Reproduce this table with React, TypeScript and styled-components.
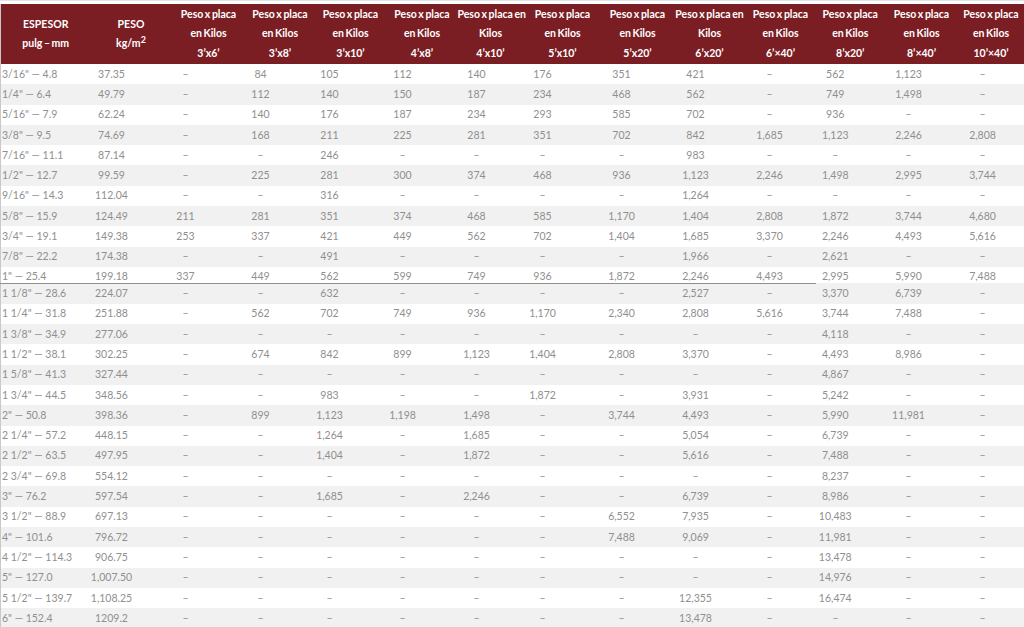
import React from "react";
import styled, { createGlobalStyle } from "styled-components";

const Global = createGlobalStyle`
  html, body { margin: 0; padding: 0; background: #fff; }
  body { font-family: Lato, "Open Sans", "Liberation Sans", sans-serif; }
`;

const Page = styled.div`
  width: 1024px;
  height: 627px;
  overflow: hidden;
  padding-top: 3px;
  box-sizing: border-box;
  border-top: 1px solid #e4e4e4;
`;

const Table = styled.table`
  width: 1024px;
  table-layout: fixed;
  border-collapse: collapse;
  border-spacing: 0;
  border-left: 1px solid #c9c9c9;
`;

const Th = styled.th`
  background: #7b1e23;
  color: #fff;
  font-family: Lato, "Liberation Sans", sans-serif;
  font-weight: 700;
  font-size: 10.5px;
  word-spacing: -1px;
  line-height: 19.5px;
  height: 60px;
  padding: 0;
  text-align: center;
  vertical-align: middle;
  white-space: nowrap;
  sup { font-size: 9px; line-height: 0; vertical-align: 4px; }
`;

const Row = styled.tr<{ $short?: boolean }>`
  height: ${(p) => (p.$short ? "16px" : "20.3px")};
  &:nth-child(even) td { background: #f1f1f1; }
`;

const Td = styled.td<{ $shift: number; $first?: boolean; $short?: boolean; $line?: boolean }>`
  padding: ${(p) => (p.$short ? "3px" : "0")} ${(p) => (p.$first ? 0 : p.$shift * 2)}px 0
    ${(p) => (p.$first ? 1 : 0)}px;
  text-align: ${(p) => (p.$first ? "left" : "center")};
  font-size: 10.5px;
  line-height: 13px;
  color: #8f8f8f;
  white-space: nowrap;
  vertical-align: ${(p) => (p.$short ? "top" : "middle")};
  border-bottom: ${(p) => (p.$line ? "1px solid #8f8f8f" : "none")};
`;

type Col = { w: number; shift: number; head: React.ReactNode };

const cols: Col[] = [
  { w: 90, shift: 0, head: <>ESPESOR<br />pulg – mm</> },
  { w: 81, shift: 19.5, head: <>PESO<br />kg/m<sup>2</sup></> },
  { w: 74, shift: 23, head: <>Peso x placa<br />en Kilos<br />3’x6’</> },
  { w: 69, shift: 19.5, head: <>Peso x placa<br />en Kilos<br />3’x8’</> },
  { w: 72, shift: 21, head: <>Peso x placa<br />en Kilos<br />3’x10’</> },
  { w: 71, shift: 19.5, head: <>Peso x placa<br />en Kilos<br />4’x8’</> },
  { w: 66, shift: 14, head: <>Peso x placa en<br />Kilos<br />4’x10’</> },
  { w: 78, shift: 20, head: <>Peso x placa<br />en Kilos<br />5’x10’</> },
  { w: 72, shift: 16, head: <>Peso x placa<br />en Kilos<br />5’x20’</> },
  { w: 72, shift: 14, head: <>Peso x placa en<br />Kilos<br />6’x20’</> },
  { w: 70, shift: 11, head: <>Peso x placa<br />en Kilos<br />6’×40’</> },
  { w: 70, shift: 15, head: <>Peso x placa<br />en Kilos<br />8’x20’</> },
  { w: 72, shift: 13, head: <>Peso x placa<br />en Kilos<br />8’×40’</> },
  { w: 67, shift: 8.5, head: <>Peso x placa<br />en Kilos<br />10’×40’</> },
];

const D = "–";

const data: string[][] = [
  ["3/16\" — 4.8", "37.35", D, "84", "105", "112", "140", "176", "351", "421", D, "562", "1,123", D],
  ["1/4\" — 6.4", "49.79", D, "112", "140", "150", "187", "234", "468", "562", D, "749", "1,498", D],
  ["5/16\" — 7.9", "62.24", D, "140", "176", "187", "234", "293", "585", "702", D, "936", D, D],
  ["3/8\" — 9.5", "74.69", D, "168", "211", "225", "281", "351", "702", "842", "1,685", "1,123", "2,246", "2,808"],
  ["7/16\" — 11.1", "87.14", D, D, "246", D, D, D, D, "983", D, D, D, D],
  ["1/2\" — 12.7", "99.59", D, "225", "281", "300", "374", "468", "936", "1,123", "2,246", "1,498", "2,995", "3,744"],
  ["9/16\" — 14.3", "112.04", D, D, "316", D, D, D, D, "1,264", D, D, D, D],
  ["5/8\" — 15.9", "124.49", "211", "281", "351", "374", "468", "585", "1,170", "1,404", "2,808", "1,872", "3,744", "4,680"],
  ["3/4\" — 19.1", "149.38", "253", "337", "421", "449", "562", "702", "1,404", "1,685", "3,370", "2,246", "4,493", "5,616"],
  ["7/8\" — 22.2", "174.38", D, D, "491", D, D, D, D, "1,966", D, "2,621", D, D],
  ["1\" — 25.4", "199.18", "337", "449", "562", "599", "749", "936", "1,872", "2,246", "4,493", "2,995", "5,990", "7,488"],
  ["1 1/8\" — 28.6", "224.07", D, D, "632", D, D, D, D, "2,527", D, "3,370", "6,739", D],
  ["1 1/4\" — 31.8", "251.88", D, "562", "702", "749", "936", "1,170", "2,340", "2,808", "5,616", "3,744", "7,488", D],
  ["1 3/8\" — 34.9", "277.06", D, D, D, D, D, D, D, D, D, "4,118", D, D],
  ["1 1/2\" — 38.1", "302.25", D, "674", "842", "899", "1,123", "1,404", "2,808", "3,370", D, "4,493", "8,986", D],
  ["1 5/8\" — 41.3", "327.44", D, D, D, D, D, D, D, D, D, "4,867", D, D],
  ["1 3/4\" — 44.5", "348.56", D, D, "983", D, D, "1,872", D, "3,931", D, "5,242", D, D],
  ["2\" — 50.8", "398.36", D, "899", "1,123", "1,198", "1,498", D, "3,744", "4,493", D, "5,990", "11,981", D],
  ["2 1/4\" — 57.2", "448.15", D, D, "1,264", D, "1,685", D, D, "5,054", D, "6,739", D, D],
  ["2 1/2\" — 63.5", "497.95", D, D, "1,404", D, "1,872", D, D, "5,616", D, "7,488", D, D],
  ["2 3/4\" — 69.8", "554.12", D, D, D, D, D, D, D, D, D, "8,237", D, D],
  ["3\" — 76.2", "597.54", D, D, "1,685", D, "2,246", D, D, "6,739", D, "8,986", D, D],
  ["3 1/2\" — 88.9", "697.13", D, D, D, D, D, D, "6,552", "7,935", D, "10,483", D, D],
  ["4\" — 101.6", "796.72", D, D, D, D, D, D, "7,488", "9,069", D, "11,981", D, D],
  ["4 1/2\" — 114.3", "906.75", D, D, D, D, D, D, D, D, D, "13,478", D, D],
  ["5\" — 127.0", "1,007.50", D, D, D, D, D, D, D, D, D, "14,976", D, D],
  ["5 1/2\" — 139.7", "1,108.25", D, D, D, D, D, D, D, "12,355", D, "16,474", D, D],
  ["6\" — 152.4", "1209.2", D, D, D, D, D, D, D, "13,478", D, D, D, D],
];

const SHORT_ROW = 10;

export default function App() {
  return (
    <>
      <Global />
      <Page>
        <Table>
          <colgroup>
            {cols.map((c, i) => (
              <col key={i} style={{ width: c.w }} />
            ))}
          </colgroup>
          <thead>
            <tr>
              {cols.map((c, i) => (
                <Th key={i}>{c.head}</Th>
              ))}
            </tr>
          </thead>
          <tbody>
            {data.map((r, ri) => {
              const short = ri === SHORT_ROW;
              return (
                <Row key={ri} $short={short}>
                  {r.map((v, ci) => (
                    <Td
                      key={ci}
                      $shift={cols[ci].shift}
                      $first={ci === 0}
                      $short={short}
                      $line={short && ci < 11}
                    >
                      {v}
                    </Td>
                  ))}
                </Row>
              );
            })}
          </tbody>
        </Table>
      </Page>
    </>
  );
}
